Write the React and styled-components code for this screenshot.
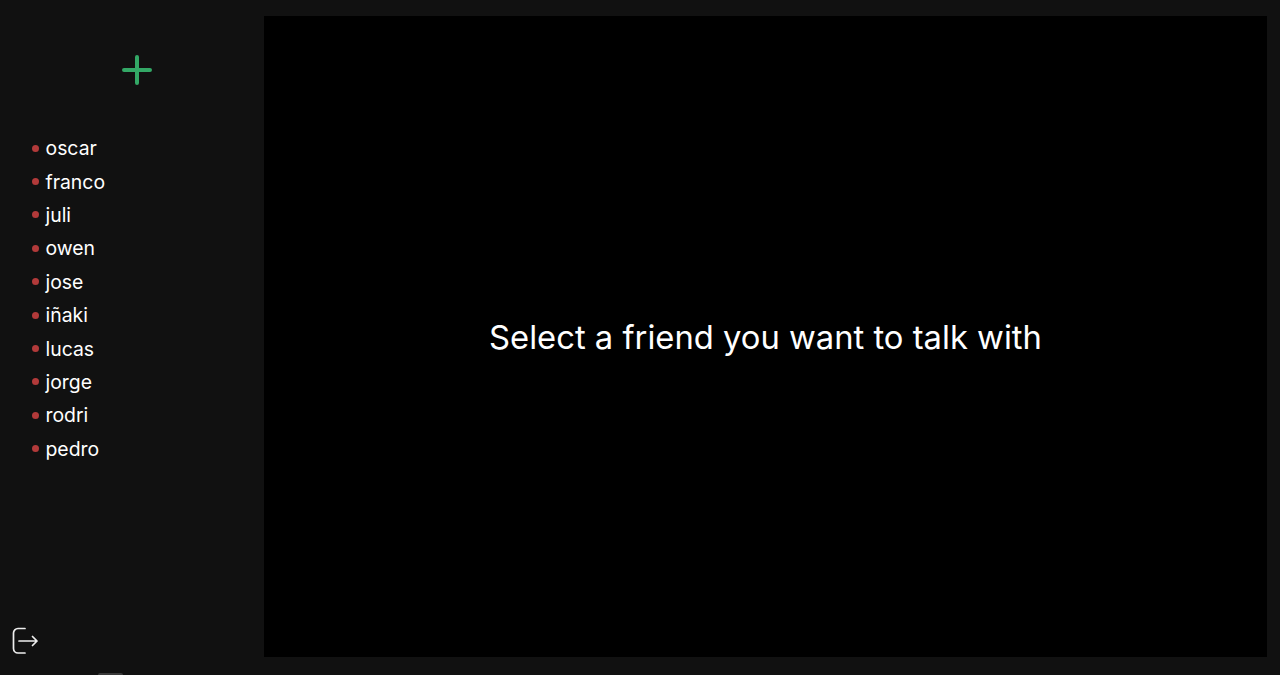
import React from 'react'
import styled, { createGlobalStyle } from 'styled-components'

const GlobalStyle = createGlobalStyle`
  html, body {
    margin: 0;
    height: 100%;
    background: #111111;
    overflow: hidden;
  }
  #root {
    height: 100%;
  }
`

const Page = styled.div`
  position: relative;
  display: flex;
  height: 675px;
  box-sizing: border-box;
  padding: 16px 13px 18px 0;
  background: #111111;
  font-family: Inter, "Open Sans", sans-serif;
  color: #ffffff;
  overflow: hidden;
`

const Sidebar = styled.aside`
  display: flex;
  flex-direction: column;
  width: 264px;
  flex-shrink: 0;
`

const AddButton = styled.button`
  display: flex;
  align-self: center;
  margin: 38px 0 0 10px;
  padding: 0;
  border: 0;
  background: none;
  color: #33a866;
`

const FriendList = styled.ul`
  list-style: none;
  margin: 45.5px 0 0;
  padding: 0 0 0 32px;
`

const Friend = styled.li`
  display: flex;
  align-items: center;
  gap: 6.5px;
  height: 33.4px;
  font-size: 19.4px;
`

const Dot = styled.span`
  width: 7px;
  height: 7px;
  border-radius: 50%;
  background: #b23a3a;
`

const LogoutButton = styled.button`
  display: flex;
  margin: auto 0 2px 12px;
  padding: 0;
  border: 0;
  background: none;
  color: #eeeeee;
`

const Chat = styled.main`
  flex: 1;
  display: flex;
  align-items: center;
  justify-content: center;
  background: #000000;
  font-size: 32.75px;
`

// sliver of something cut off by the bottom of the window
const BottomPeek = styled.div`
  position: absolute;
  left: 98px;
  bottom: 0;
  width: 25px;
  height: 2px;
  border-radius: 2px 2px 0 0;
  background: #3a3a3a;
`

const friends = ['oscar', 'franco', 'juli', 'owen', 'jose', 'iñaki', 'lucas', 'jorge', 'rodri', 'pedro']

export default function App() {
  return (
    <Page>
      <GlobalStyle />
      <Sidebar>
        <AddButton aria-label="Add friend">
          <svg width="32" height="32" viewBox="0 0 32 32" fill="none" stroke="currentColor" strokeWidth="4" strokeLinecap="round">
            <path d="M16 3v26M3 16h26" />
          </svg>
        </AddButton>
        <FriendList>
          {friends.map((name) => (
            <Friend key={name}>
              <Dot />
              {name}
            </Friend>
          ))}
        </FriendList>
        <LogoutButton aria-label="Log out">
          <svg width="28" height="28" viewBox="0 0 28 28" fill="none" stroke="currentColor" strokeWidth="1.7" strokeLinecap="round" strokeLinejoin="round">
            <path d="M13 1.5H6a4.5 4.5 0 0 0-4.5 4.5v15.5A4.5 4.5 0 0 0 6 26h7M7 14h18M20.5 9.5 25 14l-4.5 4.5" />
          </svg>
        </LogoutButton>
      </Sidebar>
      <Chat>Select a friend you want to talk with</Chat>
      <BottomPeek />
    </Page>
  )
}
